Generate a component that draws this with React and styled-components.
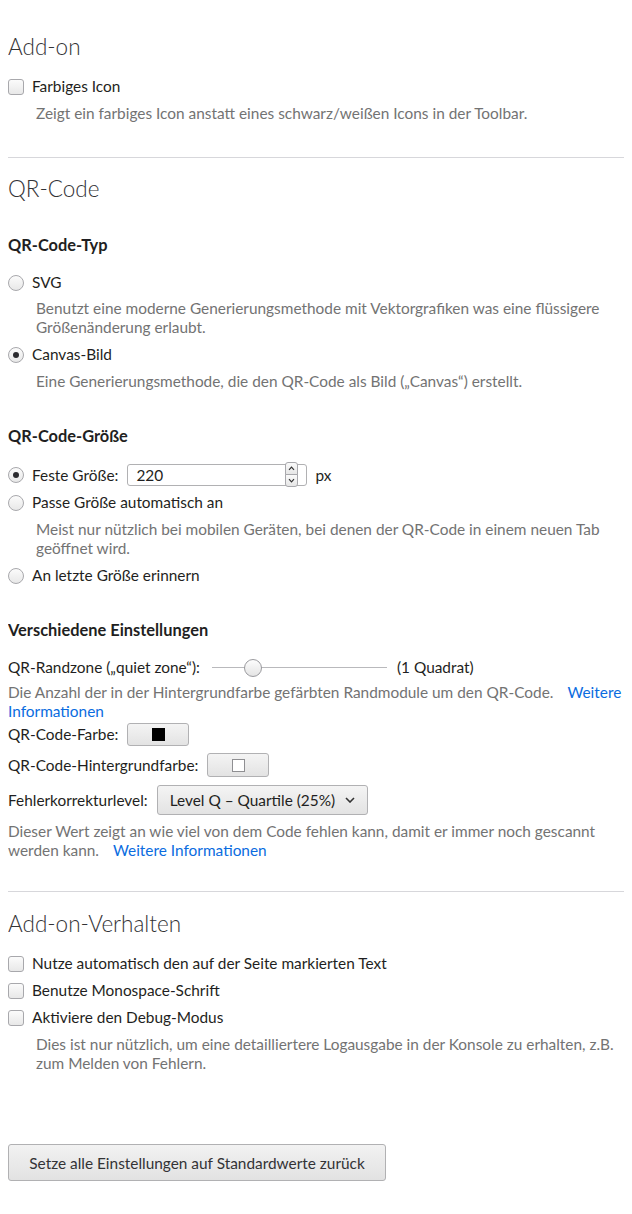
import styled, { createGlobalStyle } from "styled-components";

const GlobalStyle = createGlobalStyle`
    body {
        margin: 8px;
        background: #ffffff;
        font-family: Lato, "Noto Sans", sans-serif;
        font-size: 15.4px;
        color: #1f1f22;
    }
`;

const Page = styled.div`
    display: flex;
    flex-direction: column;
`;

const Section = styled.section`
    padding-top: ${(p) => p.top || "17px"};
    padding-bottom: ${(p) => p.bottom || "31px"};
`;

const Divider = styled.hr`
    margin: 0;
    border: 0;
    border-top: 1px solid #d7d7db;
`;

const Title = styled.h2`
    margin: 0 0 12px;
    font-size: 22.5px;
    font-weight: 300;
    line-height: 28px;
    color: #333336;
`;

const SubTitle = styled.h3`
    margin: ${(p) => p.mt || 32}px 0 ${(p) => p.mb || 14}px;
    font-size: 16.4px;
    font-weight: 700;
    line-height: 20px;
    color: #1f1f22;
`;

const Row = styled.label`
    display: flex;
    align-items: center;
    gap: 8px;
    height: ${(p) => p.h || 27}px;
    line-height: 19px;
`;

const Box = styled.span`
    flex: none;
    width: 14px;
    height: 14px;
    border: 1px solid #a8a8ac;
    border-radius: ${(p) => (p.round ? "50%" : "3px")};
    background: linear-gradient(#fbfbfb, #e8e8e8);
    display: flex;
    align-items: center;
    justify-content: center;

    &::after {
        content: "";
        display: ${(p) => (p.checked ? "block" : "none")};
        width: 6px;
        height: 6px;
        border-radius: 50%;
        background: #2a2a2e;
    }
`;

const Desc = styled.p`
    margin: ${(p) => p.mt ?? 4}px 0 4px;
    padding-left: ${(p) => (p.flush ? "0" : "28px")};
    line-height: 19px;
    color: #737373;
`;

const Link = styled.a`
    color: #0a6ce0;
    text-decoration: none;
    margin-left: ${(p) => p.gap || 0}px;
`;

const SpinWrap = styled.span`
    position: relative;
    display: inline-flex;
    margin-left: 1px;
`;

const NumberInput = styled.span`
    width: 170px;
    height: 20px;
    padding-left: 8px;
    border: 1px solid #b1b1b3;
    border-radius: 3px;
    background: #fff;
    line-height: 20px;
    color: #1f1f22;
`;

const Spin = styled.span`
    position: absolute;
    right: 9px;
    top: -2px;
    display: flex;
    flex-direction: column;
`;

const SpinBtn = styled.span`
    width: 11px;
    height: 11px;
    border: 1px solid #a8a8ac;
    border-radius: ${(p) => (p.up ? "3px 3px 0 0" : "0 0 3px 3px")};
    background: linear-gradient(#fafafa, #e6e6e6);
    display: flex;
    align-items: center;
    justify-content: center;
    margin-top: ${(p) => (p.up ? 0 : -1)}px;
`;

const Unit = styled.span`
    margin-left: 0;
`;

const Slider = styled.span`
    position: relative;
    display: inline-block;
    width: 175px;
    height: 18px;
    margin: 0 10px 0 12px;

    &::before {
        content: "";
        position: absolute;
        left: 0;
        right: 0;
        top: 8px;
        height: 1px;
        background: #b9b9bc;
    }
`;

const Thumb = styled.span`
    position: absolute;
    top: 0;
    width: 16px;
    height: 16px;
    border: 1px solid #9a9a9e;
    border-radius: 50%;
    background: linear-gradient(#fdfdfd, #e4e4e4);
`;

const FieldRow = styled.div`
    display: flex;
    align-items: center;
    gap: ${(p) => p.gap ?? 9}px;
    height: ${(p) => p.h}px;
    margin-top: ${(p) => p.mt || 0}px;
    line-height: 19px;
`;

const ColorButton = styled.button`
    width: 62px;
    height: ${(p) => p.h || 23}px;
    padding: 0;
    border: 1px solid #b1b1b3;
    border-radius: 3px;
    background: linear-gradient(#f4f4f4, #e3e3e3);
    display: flex;
    align-items: center;
    justify-content: center;
`;

const Swatch = styled.span`
    width: 11px;
    height: 11px;
    background: ${(p) => p.color};
    border: 1px solid ${(p) => (p.color === "#ffffff" ? "#8f8f92" : "#000")};
`;

const Select = styled.button`
    width: 211px;
    height: 30px;
    padding: 0 12px;
    border: 1px solid #b1b1b3;
    border-radius: 3px;
    background: linear-gradient(#f4f4f4, #e3e3e3);
    display: flex;
    align-items: center;
    justify-content: space-between;
    font: inherit;
    color: #1f1f22;
`;

const ResetButton = styled.button`
    width: 378px;
    height: 37px;
    margin-top: 67px;
    border: 1px solid #b1b1b3;
    border-radius: 3px;
    background: linear-gradient(#f2f2f2, #e2e2e2);
    font: inherit;
    color: #333336;
`;

const Chevron = ({ down }) => (
    <svg width="7" height="5" viewBox="0 0 7 5">
        <path
            d={down ? "M1 1.2 L3.5 3.8 L6 1.2" : "M1 3.8 L3.5 1.2 L6 3.8"}
            fill="none"
            stroke="#333"
            strokeWidth="1.2"
        />
    </svg>
);

const Check = ({ children }) => (
    <Row>
        <Box />
        {children}
    </Row>
);

const Radio = ({ checked, children, h }) => (
    <Row h={h}>
        <Box round checked={checked} />
        {children}
    </Row>
);

const App = () => {
    return (
        <Page>
            <GlobalStyle />
            <Section top="25px" bottom="30px">
                <Title>Add-on</Title>
                <Check>Farbiges Icon</Check>
                <Desc>Zeigt ein farbiges Icon anstatt eines schwarz/weißen Icons in der Toolbar.</Desc>
            </Section>
            <Divider />
            <Section bottom="27px">
                <Title>QR-Code</Title>

                <SubTitle>QR-Code-Typ</SubTitle>
                <Radio>SVG</Radio>
                <Desc mt={3}>
                    Benutzt eine moderne Generierungsmethode mit Vektorgrafiken was eine flüssigere
                    Größenänderung erlaubt.
                </Desc>
                <Radio checked>Canvas-Bild</Radio>
                <Desc>Eine Generierungsmethode, die den QR-Code als Bild („Canvas“) erstellt.</Desc>

                <SubTitle mt={35} mb={15}>QR-Code-Größe</SubTitle>
                <Radio checked h={28}>
                    Feste Größe:
                    <SpinWrap>
                        <NumberInput>220</NumberInput>
                        <Spin>
                            <SpinBtn up><Chevron /></SpinBtn>
                            <SpinBtn><Chevron down /></SpinBtn>
                        </Spin>
                    </SpinWrap>
                    <Unit>px</Unit>
                </Radio>
                <Radio>Passe Größe automatisch an</Radio>
                <Desc mt={4}>
                    Meist nur nützlich bei mobilen Geräten, bei denen der QR-Code in einem neuen Tab
                    geöffnet wird.
                </Desc>
                <Radio>An letzte Größe erinnern</Radio>

                <SubTitle mt={31} mb={14}>Verschiedene Einstellungen</SubTitle>
                <FieldRow h={27} gap={0}>
                    QR-Randzone („quiet zone“):
                    <Slider>
                        <Thumb style={{ left: `${(1 / 4.3) * 175 - 9}px` }} />
                    </Slider>
                    (1 Quadrat)
                </FieldRow>
                <Desc flush mt={2}>
                    Die Anzahl der in der Hintergrundfarbe gefärbten Randmodule um den QR-Code.
                    <Link href="#" gap={14}>Weitere Informationen</Link>
                </Desc>
                <FieldRow h={23} mt={-2}>
                    QR-Code-Farbe:
                    <ColorButton><Swatch color="#000000" /></ColorButton>
                </FieldRow>
                <FieldRow h={24} mt={7}>
                    QR-Code-Hintergrundfarbe:
                    <ColorButton h={24}><Swatch color="#ffffff" /></ColorButton>
                </FieldRow>
                <FieldRow h={30} mt={8}>
                    Fehlerkorrekturlevel:
                    <Select>
                        Level Q – Quartile (25%)
                        <svg width="10" height="6" viewBox="0 0 10 6">
                            <path d="M1 1 L5 5 L9 1" fill="none" stroke="#333" strokeWidth="1.6" />
                        </svg>
                    </Select>
                </FieldRow>
                <Desc flush mt={7}>
                    Dieser Wert zeigt an wie viel von dem Code fehlen kann, damit er immer noch gescannt
                    werden kann.
                    <Link href="#" gap={14}>Weitere Informationen</Link>
                </Desc>
            </Section>
            <Divider />
            <Section top="18px">
                <Title>Add-on-Verhalten</Title>
                <Check>Nutze automatisch den auf der Seite markierten Text</Check>
                <Check>Benutze Monospace-Schrift</Check>
                <Check>Aktiviere den Debug-Modus</Check>
                <Desc>
                    Dies ist nur nützlich, um eine detailliertere Logausgabe in der Konsole zu erhalten, z.B.
                    zum Melden von Fehlern.
                </Desc>
                <ResetButton>Setze alle Einstellungen auf Standardwerte zurück</ResetButton>
            </Section>
        </Page>
    );
};

export default App;
